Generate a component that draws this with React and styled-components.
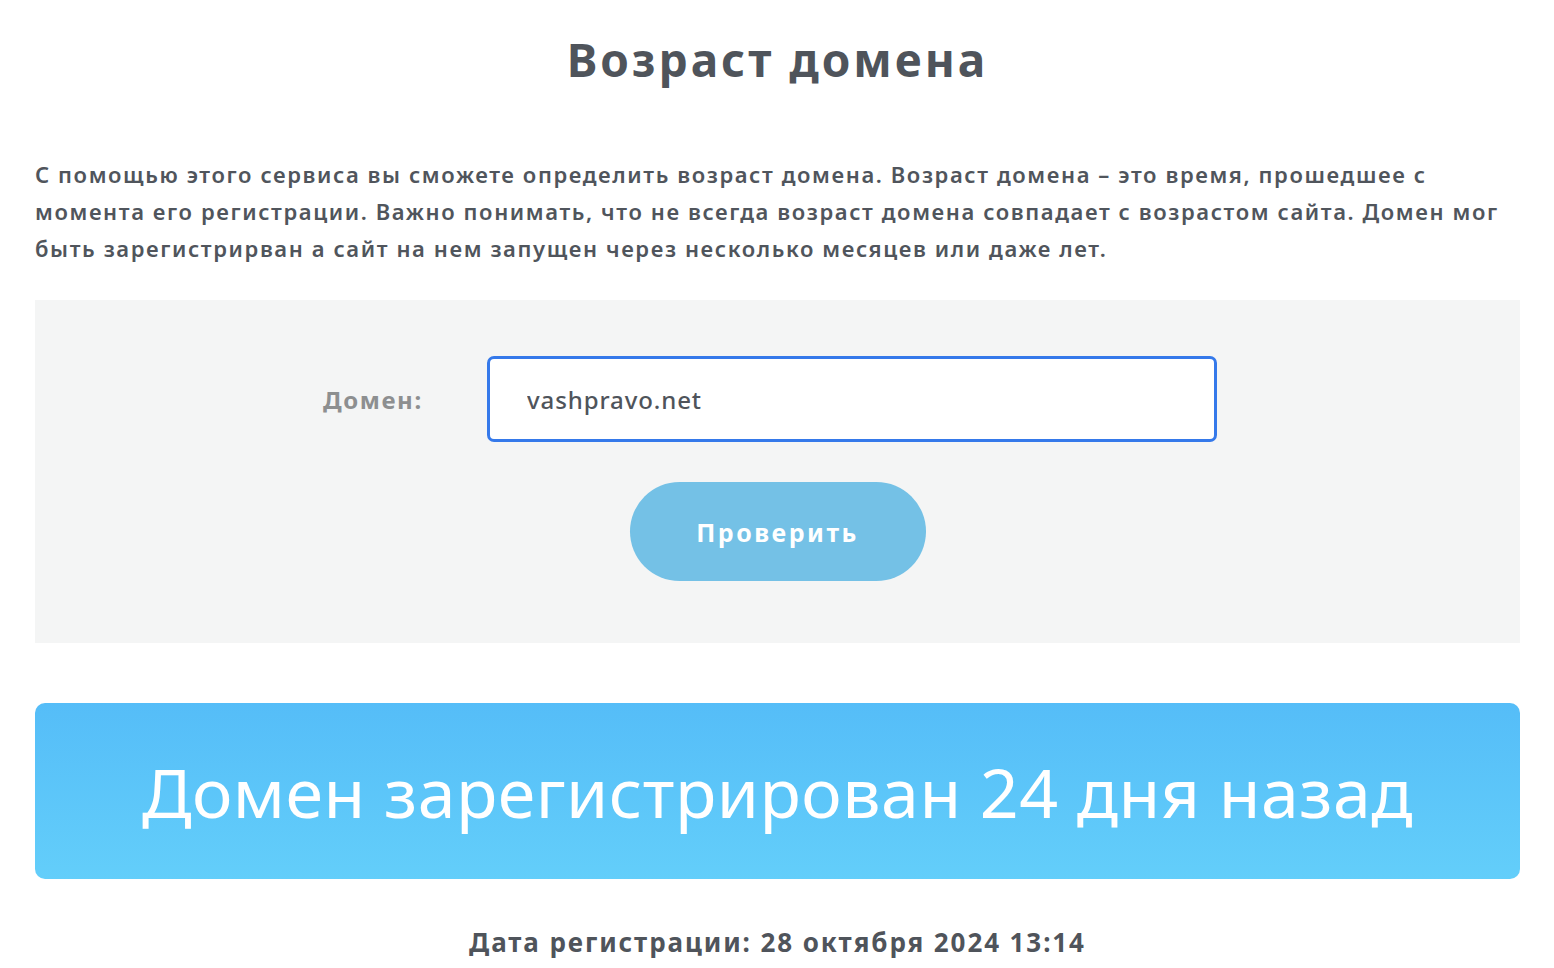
import React from "react";
import styled, { createGlobalStyle } from "styled-components";

const GlobalStyle = createGlobalStyle`
  * { box-sizing: border-box; }
  body {
    margin: 0;
    background: #ffffff;
    font-family: "Noto Sans", "Open Sans", sans-serif;
    color: #4f545b;
  }
`;

const Page = styled.div`
  width: 1485px;
  margin: 0 auto 0 35px;
  padding-top: 30px;
`;

const Title = styled.h1`
  margin: 0;
  text-align: center;
  font-size: 46px;
  font-weight: 700;
  letter-spacing: 3px;
  line-height: 58px;
  color: #4f545b;
`;

const Intro = styled.p`
  margin: 68px 0 0;
  font-size: 22px;
  font-weight: 600;
  letter-spacing: 1.6px;
  line-height: 37px;
  color: #50555c;
`;

const FormBox = styled.form`
  margin-top: 33px;
  background: #f4f5f5;
  padding: 56px 0 62px;
  display: flex;
  flex-direction: column;
  align-items: center;
  gap: 40px;
`;

const FieldRow = styled.div`
  display: grid;
  grid-template-columns: 164px 730px;
  align-items: center;
  margin-right: 15px;
`;

const Label = styled.label`
  font-size: 24px;
  font-weight: 700;
  letter-spacing: 1.6px;
  color: #8d8f90;
`;

const Input = styled.input`
  height: 86px;
  border: 3px solid #3579ea;
  border-radius: 7px;
  background: #ffffff;
  padding: 0 37px;
  font-family: inherit;
  font-size: 24px;
  font-weight: 500;
  letter-spacing: 0.9px;
  color: #4f545b;
  outline: none;
`;

const Button = styled.button`
  width: 296px;
  height: 99px;
  border: none;
  border-radius: 50px;
  background: #74c1e6;
  color: #ffffff;
  font-family: inherit;
  font-size: 25px;
  font-weight: 700;
  letter-spacing: 2.5px;
  cursor: pointer;
`;

const Result = styled.div`
  margin-top: 60px;
  height: 176px;
  border-radius: 10px;
  background: linear-gradient(180deg, #55bdf8 0%, #63cefa 100%);
  display: flex;
  align-items: center;
  justify-content: center;
  color: #ffffff;
  font-size: 68px;
  font-weight: 400;
  letter-spacing: 0.5px;
`;

const RegDate = styled.p`
  margin: 45px 0 0;
  text-align: center;
  font-size: 26px;
  font-weight: 700;
  letter-spacing: 1.9px;
  color: #4f545b;
`;

export default function App() {
  return (
    <>
      <GlobalStyle />
      <Page>
        <Title>Возраст домена</Title>
        <Intro>
          С помощью этого сервиса вы сможете определить возраст домена. Возраст
          домена – это время, прошедшее с<br />
          момента его регистрации. Важно понимать, что не всегда возраст домена
          совпадает с возрастом сайта. Домен мог<br />
          быть зарегистрирван а сайт на нем запущен через несколько месяцев
          или даже лет.
        </Intro>
        <FormBox onSubmit={(e) => e.preventDefault()}>
          <FieldRow>
            <Label htmlFor="domain">Домен:</Label>
            <Input id="domain" defaultValue="vashpravo.net" />
          </FieldRow>
          <Button type="submit">Проверить</Button>
        </FormBox>
        <Result>Домен зарегистрирован 24 дня назад</Result>
        <RegDate>Дата регистрации: 28 октября 2024 13:14</RegDate>
      </Page>
    </>
  );
}
